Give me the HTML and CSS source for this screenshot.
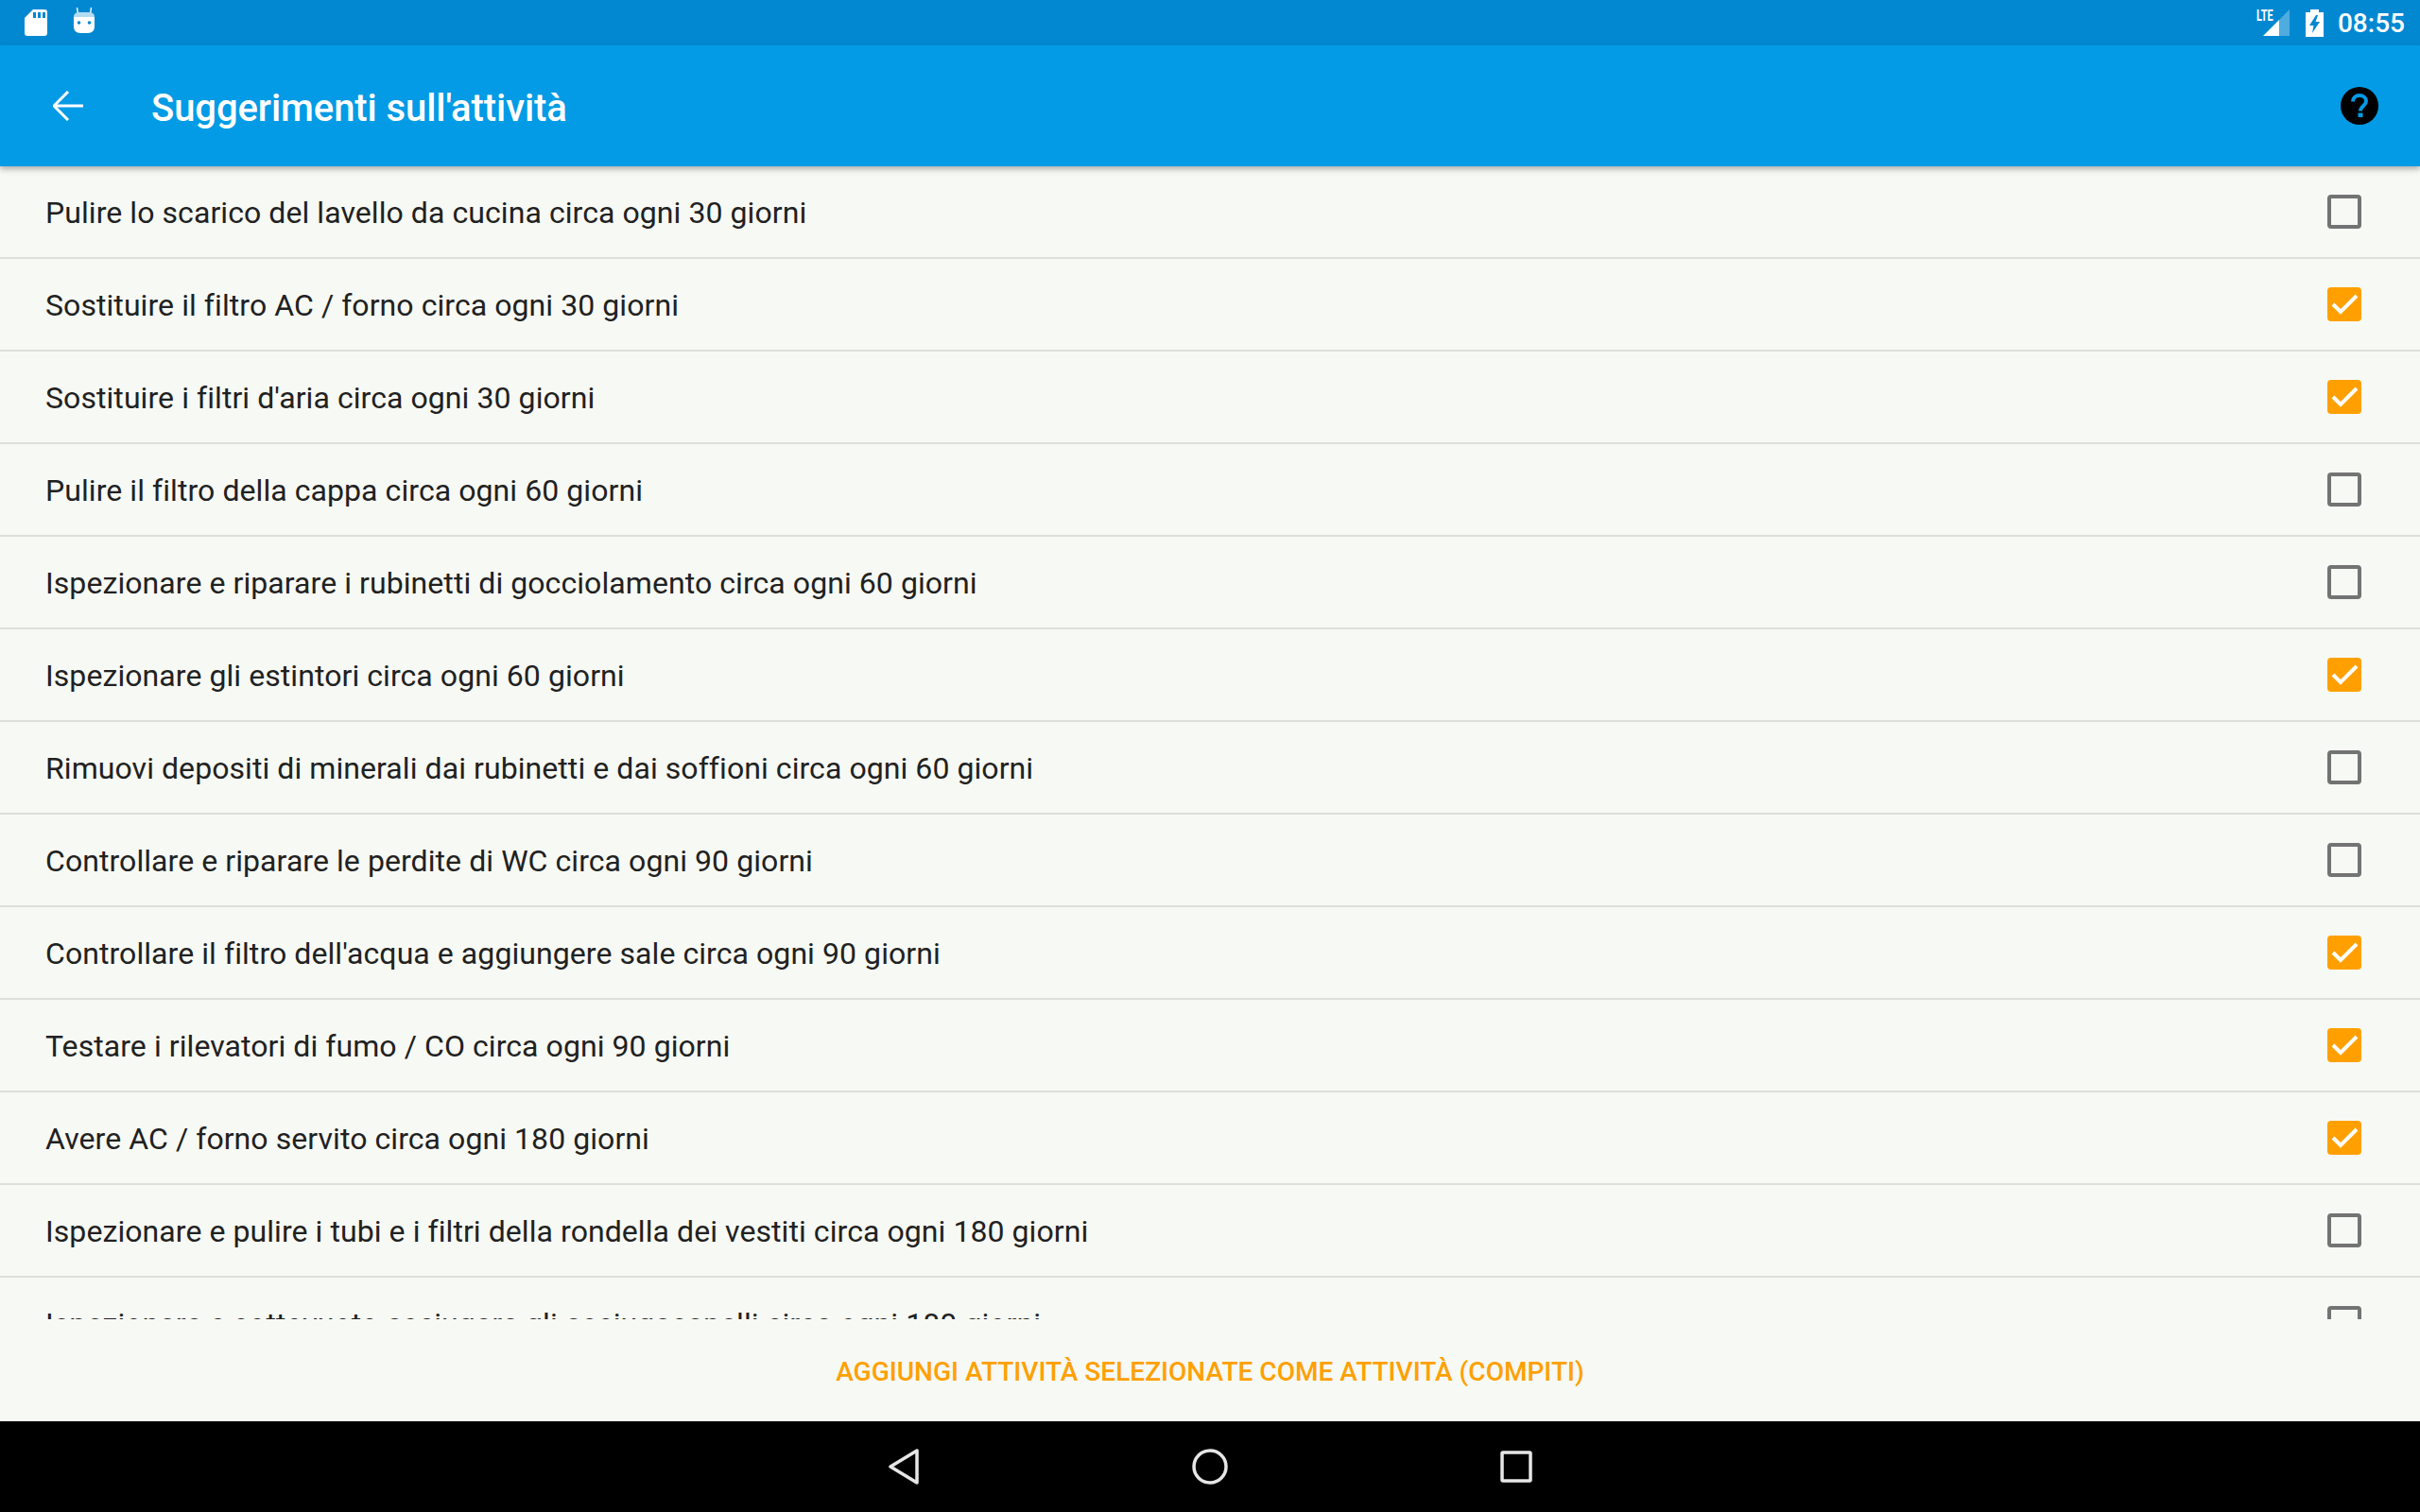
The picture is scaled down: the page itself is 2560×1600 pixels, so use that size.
FILE: index.html
```html
<!DOCTYPE html>
<html lang="it">
<head>
    <meta charset="UTF-8">
    <title>Suggerimenti sull'attività</title>
    <link rel="stylesheet" href="styles.css">
</head>
<body>
    <div class="app">
        <div class="status-bar">
            <div class="status-left">
                <svg class="icon-sd" width="24" height="28" viewBox="0 0 24 28">
                    <path d="M9 0H21Q24 0 24 3V25Q24 28 21 28H3Q0 28 0 25V9Z" fill="#fff"/>
                    <rect x="9" y="3" width="3" height="6" fill="#0288d1"/>
                    <rect x="14" y="3" width="3" height="6" fill="#0288d1"/>
                    <rect x="19" y="3" width="3" height="6" fill="#0288d1"/>
                </svg>
                <svg class="icon-bot" width="22" height="27" viewBox="0 0 22 27">
                    <path d="M4.500 7L3.500 0M17.500 7L18.500 0" stroke="#fff" stroke-width="1.400" fill="none"/>
                    <path d="M0 10Q0 5 6 5H16Q22 5 22 10V11H0Z" fill="#b3dcf3"/>
                    <path d="M0 10H22V20Q22 27 15 27H7Q0 27 0 20Z" fill="#fff"/>
                    <circle cx="5.500" cy="16" r="1.800" fill="#0288d1"/>
                    <circle cx="16.500" cy="16" r="1.800" fill="#0288d1"/>
                </svg>
            </div>
            <div class="status-right">
                <div class="signal">
                    <span class="lte">LTE</span>
                    <svg width="28" height="28" viewBox="0 0 28 28">
                        <path d="M17 11L28 0V28H17Z" fill="#fff" fill-opacity="0.3"/>
                        <path d="M0 28L17 11V28Z" fill="#fff"/>
                    </svg>
                </div>
                <svg class="icon-battery" width="19" height="29" viewBox="0 0 19 29">
                    <path d="M5 0H14V3H19V29H0V3H5Z" fill="#fff"/>
                    <path d="M11 6L4 17H8.500L7 25L15 13H10.500L13 6Z" fill="#0288d1"/>
                </svg>
                <span class="clock">08:55</span>
            </div>
        </div>

        <div class="toolbar">
            <svg class="back-arrow" width="32" height="32" viewBox="0 0 32 32">
                <path d="M32 16H2M16 1L1 16L16 31" stroke="#fff" stroke-width="3" fill="none"/>
            </svg>
            <h1 class="toolbar-title">Suggerimenti sull'attività</h1>
            <svg class="help-icon" width="40" height="40" viewBox="0 0 40 40">
                <circle cx="20" cy="20" r="20" fill="#000"/>
                <path d="M13 15.500C13 11.500 16 9 20 9C24 9 27 11.500 27 15C27 20 21 20 21 25.500" stroke="#039be5" stroke-width="4" fill="none"/>
                <rect x="18.500" y="27.500" width="5" height="4.500" fill="#039be5"/>
            </svg>
        </div>

        <div class="task-list">
            <div class="task-row">
                <span class="task-text">Pulire lo scarico del lavello da cucina circa ogni 30 giorni</span>
                <span class="checkbox"></span>
            </div>
            <div class="task-row">
                <span class="task-text">Sostituire il filtro AC / forno circa ogni 30 giorni</span>
                <span class="checkbox checked"><svg width="36" height="36" viewBox="0 0 36 36"><path d="M6 18L14 26L31 9" stroke="#fff" stroke-width="4" fill="none"/></svg></span>
            </div>
            <div class="task-row">
                <span class="task-text">Sostituire i filtri d'aria circa ogni 30 giorni</span>
                <span class="checkbox checked"><svg width="36" height="36" viewBox="0 0 36 36"><path d="M6 18L14 26L31 9" stroke="#fff" stroke-width="4" fill="none"/></svg></span>
            </div>
            <div class="task-row">
                <span class="task-text">Pulire il filtro della cappa circa ogni 60 giorni</span>
                <span class="checkbox"></span>
            </div>
            <div class="task-row">
                <span class="task-text">Ispezionare e riparare i rubinetti di gocciolamento circa ogni 60 giorni</span>
                <span class="checkbox"></span>
            </div>
            <div class="task-row">
                <span class="task-text">Ispezionare gli estintori circa ogni 60 giorni</span>
                <span class="checkbox checked"><svg width="36" height="36" viewBox="0 0 36 36"><path d="M6 18L14 26L31 9" stroke="#fff" stroke-width="4" fill="none"/></svg></span>
            </div>
            <div class="task-row">
                <span class="task-text">Rimuovi depositi di minerali dai rubinetti e dai soffioni circa ogni 60 giorni</span>
                <span class="checkbox"></span>
            </div>
            <div class="task-row">
                <span class="task-text">Controllare e riparare le perdite di WC circa ogni 90 giorni</span>
                <span class="checkbox"></span>
            </div>
            <div class="task-row">
                <span class="task-text">Controllare il filtro dell'acqua e aggiungere sale circa ogni 90 giorni</span>
                <span class="checkbox checked"><svg width="36" height="36" viewBox="0 0 36 36"><path d="M6 18L14 26L31 9" stroke="#fff" stroke-width="4" fill="none"/></svg></span>
            </div>
            <div class="task-row">
                <span class="task-text">Testare i rilevatori di fumo / CO circa ogni 90 giorni</span>
                <span class="checkbox checked"><svg width="36" height="36" viewBox="0 0 36 36"><path d="M6 18L14 26L31 9" stroke="#fff" stroke-width="4" fill="none"/></svg></span>
            </div>
            <div class="task-row">
                <span class="task-text">Avere AC / forno servito circa ogni 180 giorni</span>
                <span class="checkbox checked"><svg width="36" height="36" viewBox="0 0 36 36"><path d="M6 18L14 26L31 9" stroke="#fff" stroke-width="4" fill="none"/></svg></span>
            </div>
            <div class="task-row">
                <span class="task-text">Ispezionare e pulire i tubi e i filtri della rondella dei vestiti circa ogni 180 giorni</span>
                <span class="checkbox"></span>
            </div>
            <div class="task-row">
                <span class="task-text">Ispezionare e sottovuoto asciugare gli asciugacapelli circa ogni 180 giorni</span>
                <span class="checkbox"></span>
            </div>
        </div>

        <div class="footer">
            <button class="add-btn" type="button">AGGIUNGI ATTIVITÀ SELEZIONATE COME ATTIVITÀ (COMPITI)</button>
        </div>

        <div class="nav-bar">
            <svg width="32" height="38" viewBox="0 0 32 38">
                <path d="M30 2V36L2 19Z" stroke="#e6e6e6" stroke-width="3.500" stroke-linejoin="round" fill="none"/>
            </svg>
            <svg width="38" height="38" viewBox="0 0 38 38">
                <circle cx="19" cy="19" r="17" stroke="#e6e6e6" stroke-width="3.500" fill="none"/>
            </svg>
            <svg width="34" height="34" viewBox="0 0 34 34">
                <rect x="2" y="2" width="30" height="30" rx="1" stroke="#e6e6e6" stroke-width="3.500" fill="none"/>
            </svg>
        </div>
    </div>
</body>
</html>
```

FILE: styles.css
```css
* {
    margin: 0;
    padding: 0;
    box-sizing: border-box;
}

body {
    font-family: Roboto, 'Noto Sans', sans-serif;
    background: #f7f9f4;
}

svg {
    display: block;
}

.app {
    width: 2560px;
    height: 1600px;
    display: flex;
    flex-direction: column;
    overflow: hidden;
}

.status-bar {
    height: 48px;
    flex: none;
    background: #0288d1;
    display: flex;
    justify-content: space-between;
    align-items: center;
    padding: 0 16px 0 26px;
}

.status-left {
    display: flex;
    align-items: center;
    gap: 28px;
}

.icon-bot {
    margin-top: -5px;
}

.status-right {
    display: flex;
    align-items: center;
}

.signal {
    display: flex;
    align-items: flex-start;
    margin-right: 17px;
}

.lte {
    color: #fff;
    font-size: 16px;
    font-weight: 700;
    line-height: 14px;
    width: 17px;
    margin-right: -10px;
    transform: scaleX(0.68);
    transform-origin: left top;
}

.icon-battery {
    margin-right: 15px;
}

.clock {
    color: #fff;
    font-size: 28px;
    font-weight: 500;
}

.toolbar {
    height: 128px;
    flex: none;
    background: #039be5;
    display: flex;
    align-items: center;
    padding: 0 44px 0 56px;
    position: relative;
    z-index: 1;
    box-shadow: 0 3px 6px rgba(0, 0, 0, 0.3);
}

.toolbar-title {
    flex: 1;
    margin-left: 72px;
    padding-top: 4px;
    color: #fff;
    font-size: 40px;
    font-weight: 500;
    letter-spacing: -0.08px;
}

.task-list {
    height: 1220px;
    flex: none;
    overflow: hidden;
}

.task-row {
    height: 98px;
    display: flex;
    justify-content: space-between;
    align-items: center;
    padding: 0 62px 0 48px;
    border-bottom: 2px solid #dddfda;
}

.task-text {
    padding-top: 1px;
    color: #212121;
    font-size: 32px;
    letter-spacing: 0.07px;
}

.checkbox {
    width: 36px;
    height: 36px;
    border: 4px solid #737373;
    border-radius: 4px;
}

.checkbox.checked {
    border: none;
    background: #ffa000;
}

.footer {
    height: 108px;
    flex: none;
    display: flex;
    justify-content: center;
    align-items: center;
    padding-top: 2px;
}

.add-btn {
    background: none;
    border: none;
    color: #ffa000;
    font-family: inherit;
    font-size: 28px;
    font-weight: 500;
    letter-spacing: 0.03px;
}

.nav-bar {
    height: 96px;
    flex: none;
    background: #000;
    display: flex;
    justify-content: center;
    align-items: center;
    gap: 288.500px;
    padding-left: 1px;
}
```
